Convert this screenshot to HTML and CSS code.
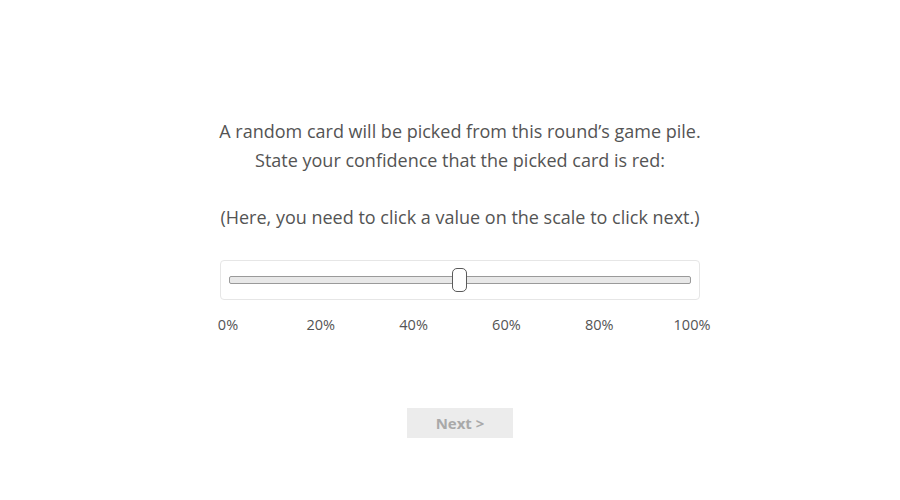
FILE: index.html
```html
<!DOCTYPE html>
<html>
<head>
<meta charset="utf-8">
<link rel="stylesheet" href="styles.css">
</head>
<body>
<div class="page">
  <div class="question">
    <p class="prompt">A random card will be picked from this round’s game pile.<br>State your confidence that the picked card is red:<br><br>(Here, you need to click a value on the scale to click next.)</p>
    <div class="slider-box">
      <div class="track">
        <div class="thumb"></div>
      </div>
    </div>
    <div class="labels">
      <span class="lbl"><span>0%</span></span>
      <span class="lbl"><span>20%</span></span>
      <span class="lbl"><span>40%</span></span>
      <span class="lbl"><span>60%</span></span>
      <span class="lbl"><span>80%</span></span>
      <span class="lbl"><span>100%</span></span>
    </div>
  </div>
  <div class="actions">
    <button class="next">Next &gt;</button>
  </div>
</div>
</body>
</html>
```
FILE: styles.css
```css
html, body {
  margin: 0;
  padding: 0;
  background: #fff;
}
body {
  font-family: "Open Sans", "Liberation Sans", sans-serif;
  color: #545454;
}
.page {
  padding-left: 20px;
  padding-top: 117px;
  display: flex;
  flex-direction: column;
  align-items: center;
}
.question {
  width: 480px;
  display: flex;
  flex-direction: column;
}
.prompt {
  margin: 0 -20px;
  font-size: 18px;
  line-height: 28.5px;
  text-align: center;
  white-space: nowrap;
}
.slider-box {
  margin-top: 29px;
  height: 38px;
  border: 1px solid #e6e6e6;
  border-radius: 4px;
  padding: 0 8px;
  display: flex;
  align-items: center;
}
.track {
  position: relative;
  flex: 1;
  height: 6px;
  background: #e8e8e8;
  border: 1px solid #9a9a9a;
  border-radius: 2px;
}
.thumb {
  position: absolute;
  left: 50%;
  top: 50%;
  width: 13px;
  height: 22px;
  margin-left: -8px;
  margin-top: -12px;
  background: #fff;
  border: 1px solid #5a5a5a;
  border-radius: 5px;
}
.labels {
  margin: 15px 0 0 8px;
  width: 464px;
  display: flex;
  justify-content: space-between;
  font-size: 14.5px;
  line-height: 20px;
}
.lbl {
  width: 0;
  display: flex;
  justify-content: center;
}
.lbl span {
  white-space: nowrap;
}
.actions {
  margin-top: 73px;
  display: flex;
  justify-content: center;
}
.next {
  width: 106px;
  height: 30px;
  border: none;
  border-radius: 0;
  background: #ececec;
  color: #a9a9a9;
  font-family: "Open Sans", "Liberation Sans", sans-serif;
  font-weight: bold;
  font-size: 15px;
  padding: 0;
}
```
